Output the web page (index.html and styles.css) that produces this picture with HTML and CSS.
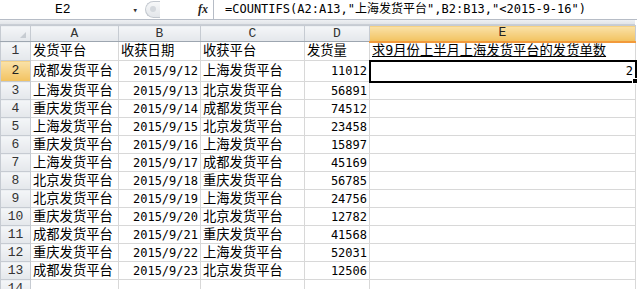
FILE: index.html
```html
<!DOCTYPE html>
<html lang="zh-CN">
<head>
    <meta charset="UTF-8">
    <title>COUNTIFS</title>
    <link rel="stylesheet" href="styles.css">
</head>
<body>
<div class="formula-bar">
    <div class="name-box">
        <span class="cell-ref">E2</span>
        <span class="drop">&#9662;</span>
    </div>
    <div class="fx-area">
        <span class="pill"></span>
        <span class="fx">fx</span>
    </div>
    <div class="formula">=COUNTIFS(A2:A13,"上海发货平台",B2:B13,"&lt;2015-9-16")</div>
</div>
<div class="strip"></div>

<table class="sheet">
    <colgroup>
        <col class="c-hdr">
        <col class="c-a">
        <col class="c-b">
        <col class="c-c">
        <col class="c-d">
        <col class="c-e">
    </colgroup>
    <tr class="col-heads">
        <th class="corner"><span class="tri"></span></th>
        <th>A</th>
        <th>B</th>
        <th>C</th>
        <th>D</th>
        <th class="sel">E</th>
    </tr>
    <tr class="r1">
        <th>1</th>
        <td class="txt">发货平台</td>
        <td class="txt">收获日期</td>
        <td class="txt">收获平台</td>
        <td class="txt">发货量</td>
        <td class="txt title">求9月份上半月上海发货平台的发货单数</td>
    </tr>
    <tr class="r2">
        <th class="sel">2</th>
        <td class="txt">成都发货平台</td>
        <td class="num">2015/9/12</td>
        <td class="txt">上海发货平台</td>
        <td class="num">11012</td>
        <td class="num active">2</td>
    </tr>
    <tr>
        <th>3</th>
        <td class="txt">上海发货平台</td>
        <td class="num">2015/9/13</td>
        <td class="txt">北京发货平台</td>
        <td class="num">56891</td>
        <td></td>
    </tr>
    <tr>
        <th>4</th>
        <td class="txt">重庆发货平台</td>
        <td class="num">2015/9/14</td>
        <td class="txt">成都发货平台</td>
        <td class="num">74512</td>
        <td></td>
    </tr>
    <tr>
        <th>5</th>
        <td class="txt">上海发货平台</td>
        <td class="num">2015/9/15</td>
        <td class="txt">北京发货平台</td>
        <td class="num">23458</td>
        <td></td>
    </tr>
    <tr>
        <th>6</th>
        <td class="txt">重庆发货平台</td>
        <td class="num">2015/9/16</td>
        <td class="txt">上海发货平台</td>
        <td class="num">15897</td>
        <td></td>
    </tr>
    <tr>
        <th>7</th>
        <td class="txt">上海发货平台</td>
        <td class="num">2015/9/17</td>
        <td class="txt">成都发货平台</td>
        <td class="num">45169</td>
        <td></td>
    </tr>
    <tr>
        <th>8</th>
        <td class="txt">北京发货平台</td>
        <td class="num">2015/9/18</td>
        <td class="txt">重庆发货平台</td>
        <td class="num">56785</td>
        <td></td>
    </tr>
    <tr>
        <th>9</th>
        <td class="txt">北京发货平台</td>
        <td class="num">2015/9/19</td>
        <td class="txt">上海发货平台</td>
        <td class="num">24756</td>
        <td></td>
    </tr>
    <tr>
        <th>10</th>
        <td class="txt">重庆发货平台</td>
        <td class="num">2015/9/20</td>
        <td class="txt">北京发货平台</td>
        <td class="num">12782</td>
        <td></td>
    </tr>
    <tr>
        <th>11</th>
        <td class="txt">成都发货平台</td>
        <td class="num">2015/9/21</td>
        <td class="txt">重庆发货平台</td>
        <td class="num">41568</td>
        <td></td>
    </tr>
    <tr>
        <th>12</th>
        <td class="txt">重庆发货平台</td>
        <td class="num">2015/9/22</td>
        <td class="txt">上海发货平台</td>
        <td class="num">52031</td>
        <td></td>
    </tr>
    <tr>
        <th>13</th>
        <td class="txt">成都发货平台</td>
        <td class="num">2015/9/23</td>
        <td class="txt">北京发货平台</td>
        <td class="num">12506</td>
        <td></td>
    </tr>
    <tr>
        <th>14</th>
        <td></td>
        <td></td>
        <td></td>
        <td></td>
        <td></td>
    </tr>
</table>
</body>
</html>
```

FILE: styles.css
```css
body {
    margin: 0;
    width: 637px;
    height: 289px;
    overflow: hidden;
    background-color: #ffffff;
    font-family: "DejaVu Sans Mono", "Noto Sans CJK SC", monospace;
    font-size: 12px;
    color: #000000;
}

/* formula bar */
.formula-bar {
    display: flex;
    height: 19px;
    border-bottom: 1px solid #b6bcc6;
    background-color: #ffffff;
}

.name-box {
    width: 142px;
    display: flex;
    align-items: center;
}

.cell-ref {
    font-family: "Liberation Mono", monospace;
    font-size: 13px;
    margin-left: 55px;
}

.drop {
    font-size: 9px;
    color: #333;
    margin-left: 62px;
}

.fx-area {
    width: 71px;
    display: flex;
    align-items: center;
    border-right: 1px solid #b6bcc6;
}

.pill {
    width: 14px;
    height: 15px;
    margin-left: 3px;
    border: 1px solid #c3c8cf;
    border-right: 0;
    border-radius: 9px 0 0 9px;
    background: linear-gradient(#f7f8f9, #e3e6ea);
    position: relative;
}

.pill::after {
    content: "";
    position: absolute;
    left: 4px;
    top: 4px;
    width: 6px;
    height: 6px;
    border-radius: 50%;
    background: #d4d8dd;
}

.fx {
    font-family: "Liberation Serif", serif;
    font-style: italic;
    font-weight: bold;
    font-size: 12px;
    margin-left: 38px;
    color: #222;
}

.formula {
    padding-left: 11px;
    line-height: 19px;
    white-space: nowrap;
}

.strip {
    height: 4px;
    background: linear-gradient(#eef0f3, #e2e5e9);
    border-bottom: 1px solid #c9ced5;
    width: 635px;
}

/* grid */
.sheet {
    border-collapse: collapse;
    table-layout: fixed;
    width: 635px;
}

.c-hdr { width: 30px; }
.c-a { width: 88px; }
.c-b { width: 82px; }
.c-c { width: 104px; }
.c-d { width: 65px; }
.c-e { width: 266px; }

th {
    font-family: "Liberation Mono", monospace;
    font-weight: normal;
    font-size: 13px;
    line-height: 14px;
    color: #333;
    background: linear-gradient(#f4f6f8, #e4e7eb);
    border: 1px solid #c6cbd2;
    padding: 0;
    text-align: center;
}

.col-heads {
    height: 16px;
}

.col-heads th {
    border-bottom: 1px solid #9da6b0;
}

.corner {
    position: relative;
}

.tri {
    position: absolute;
    right: 4px;
    bottom: 3px;
    border-left: 6px solid transparent;
    border-bottom: 6px solid #c7ccd2;
}

th.sel {
    background: linear-gradient(#fae2a9, #f2c25f);
    color: #222;
}

.col-heads th.sel {
    border-bottom: 2px solid #f29a3b;
}

tr {
    height: 18px;
}

tr.r1 {
    height: 19px;
}

tr.r2 {
    height: 21px;
}

td {
    border: 1px solid #d8d8d8;
    padding: 0 2px;
    line-height: 14px;
    white-space: nowrap;
    overflow: hidden;
    vertical-align: middle;
}

td.txt {
    font-size: 13.3px;
}

td.num {
    text-align: right;
}

.title {
    text-decoration: underline;
}

td.active {
    position: relative;
    overflow: visible;
    outline: 2px solid #000;
    outline-offset: -1px;
}

.active::after {
    content: "";
    position: absolute;
    right: -3px;
    bottom: -3px;
    width: 4px;
    height: 4px;
    background: #000;
    border: 1px solid #fff;
}
```
